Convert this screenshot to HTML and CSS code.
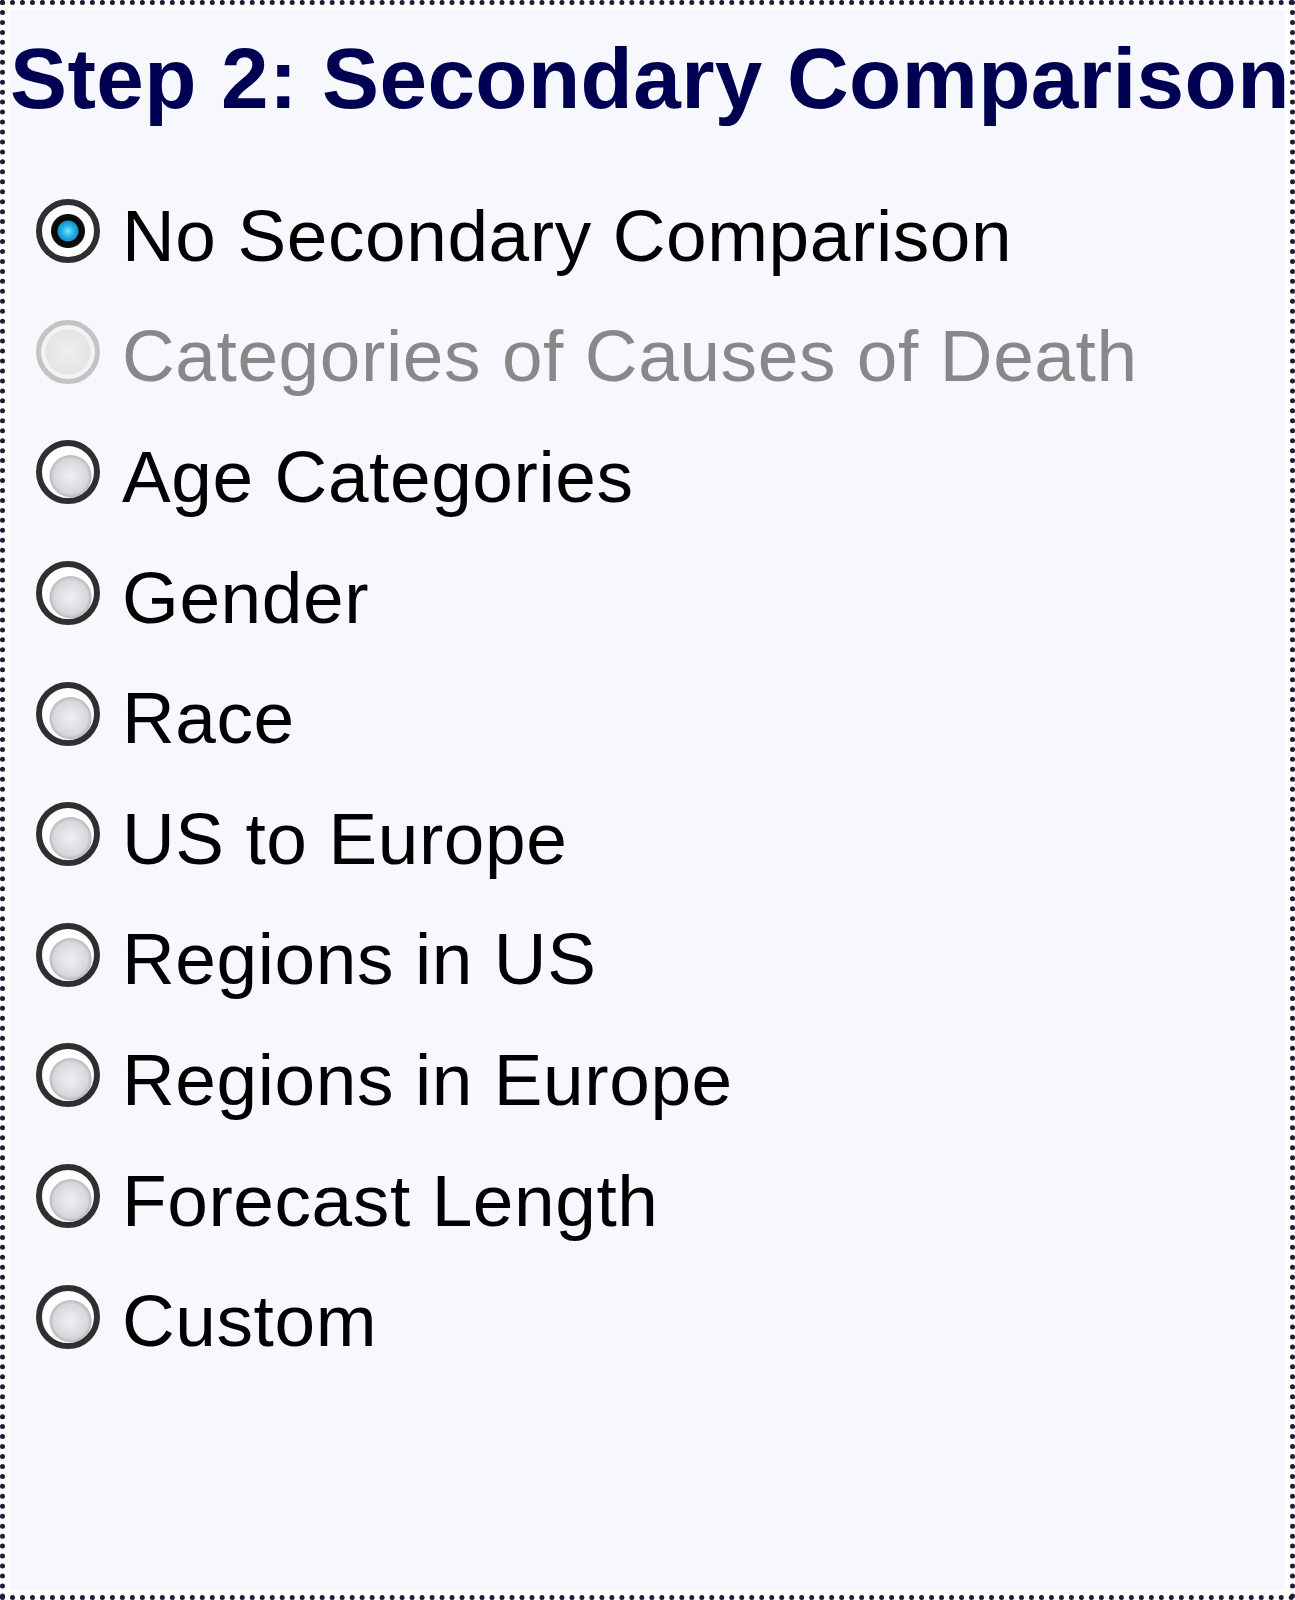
FILE: index.html
```html
<!DOCTYPE html>
<html>
<head>
<meta charset="utf-8">
<link rel="stylesheet" href="styles.css">
</head>
<body>
<div class="panel">
  <div class="inner">
    <h2 class="title">Step 2: Secondary Comparison</h2>
    <div class="options">
      <label class="opt"><input class="radio" type="radio" name="sec" checked><span class="txt">No Secondary Comparison</span></label>
      <label class="opt disabled"><input class="radio" type="radio" name="sec" disabled><span class="txt">Categories of Causes of Death</span></label>
      <label class="opt"><input class="radio" type="radio" name="sec"><span class="txt">Age Categories</span></label>
      <label class="opt"><input class="radio" type="radio" name="sec"><span class="txt">Gender</span></label>
      <label class="opt"><input class="radio" type="radio" name="sec"><span class="txt">Race</span></label>
      <label class="opt"><input class="radio" type="radio" name="sec"><span class="txt">US to Europe</span></label>
      <label class="opt"><input class="radio" type="radio" name="sec"><span class="txt">Regions in US</span></label>
      <label class="opt"><input class="radio" type="radio" name="sec"><span class="txt">Regions in Europe</span></label>
      <label class="opt"><input class="radio" type="radio" name="sec"><span class="txt">Forecast Length</span></label>
      <label class="opt"><input class="radio" type="radio" name="sec"><span class="txt">Custom</span></label>
    </div>
  </div>
</div>
</body>
</html>
```
FILE: styles.css
```css
html, body {
  margin: 0;
  padding: 0;
  background: #ffffff;
}

.panel {
  width: 1295px;
  height: 1600px;
  box-sizing: border-box;
  border: 5px dotted #1c1c38;
  padding: 5px;
  background: #ffffff;
}

.inner {
  height: 100%;
  background: #f7f7fe;
  font-family: "Liberation Sans", Arial, sans-serif;
}

.title {
  margin: 0;
  padding-top: 21px;
  font-size: 85.5px;
  line-height: 96px;
  letter-spacing: 0.4px;
  font-weight: bold;
  color: #000052;
  white-space: nowrap;
}

.options {
  margin-top: 44px;
  display: flex;
  flex-direction: column;
}

.opt {
  display: flex;
  align-items: center;
  height: 120.6px;
  padding-left: 26px;
  color: #000000;
  font-size: 73px;
  white-space: nowrap;
}

.txt {
  padding-top: 9px;
  line-height: 80px;
  margin-left: 22px;
  letter-spacing: 0.6px;
}

.disabled .txt {
  color: #888888;
}

.radio {
  appearance: none;
  -webkit-appearance: none;
  margin: 0;
  width: 64px;
  height: 64px;
  flex: 0 0 64px;
  box-sizing: border-box;
  border-radius: 50%;
  border: 6px solid #2f2f2f;
  background: radial-gradient(circle at 55% 58%, #eff0f2 0, #d6d8dc 17px, #b9bcc1 20.5px, #ffffff 21.5px, #ffffff 26px);
}

.radio:checked {
  background: radial-gradient(circle at 50% 50%, #7fe3ff 0, #22b4e8 6px, #1690c8 10px, #050505 11px, #111111 16.5px, #ffffff 17.5px, #ffffff 26px);
}

.radio:disabled {
  border: 5px solid #c3c3c3;
  background: radial-gradient(circle at 50% 50%, #eeeeee 0, #e4e4e4 22px, #f3f3f3 23px, #f3f3f3 27px);
}
```
